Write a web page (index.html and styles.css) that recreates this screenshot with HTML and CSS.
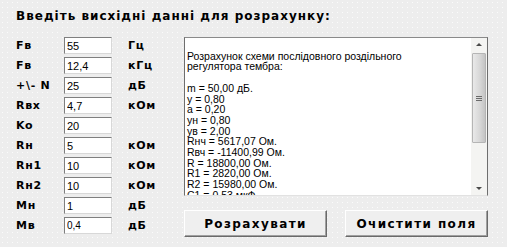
FILE: index.html
```html
<!DOCTYPE html>
<html lang="uk">
<head>
  <meta charset="UTF-8">
  <title>Регулятор тембра</title>
  <link rel="stylesheet" href="styles.css">
</head>
<body>
  <div class="window">
    <h2 class="title">Введіть висхідні данні для розрахунку:</h2>

    <div class="main">
      <div class="form">
        <label>Fв</label><input type="text" value="55"><span class="unit">Гц</span>
        <label>Fв</label><input type="text" value="12,4"><span class="unit">кГц</span>
        <label>+\- N</label><input type="text" value="25"><span class="unit">дБ</span>
        <label>Rвх</label><input type="text" value="4,7"><span class="unit">кОм</span>
        <label>Ko</label><input type="text" value="20"><span class="unit"></span>
        <label>Rн</label><input type="text" value="5"><span class="unit">кОм</span>
        <label>Rн1</label><input type="text" value="10"><span class="unit">кОм</span>
        <label>Rн2</label><input type="text" value="10"><span class="unit">кОм</span>
        <label>Мн</label><input type="text" value="1"><span class="unit">дБ</span>
        <label>Мв</label><input type="text" value="0,4" class="small"><span class="unit">дБ</span>
      </div>

      <div class="side">
        <div class="memo">
          <div class="memo-text">
            <div>&nbsp;</div>
            <div>Розрахунок схеми послідовного роздільного</div>
            <div>регулятора тембра:</div>
            <div>&nbsp;</div>
            <div>m = 50,00 дБ.</div>
            <div>y = 0,80</div>
            <div>a = 0,20</div>
            <div>yн = 0,80</div>
            <div>yв = 2,00</div>
            <div>Rнч = 5617,07 Ом.</div>
            <div>Rвч = -11400,99 Ом.</div>
            <div>R = 18800,00 Ом.</div>
            <div>R1 = 2820,00 Ом.</div>
            <div>R2 = 15980,00 Ом.</div>
            <div>C1 = 0,53 мкФ.</div>
          </div>
          <div class="scrollbar">
            <div class="arrow up"></div>
            <div class="thumb"><span class="grip"></span></div>
            <div class="track"></div>
            <div class="arrow down"></div>
          </div>
        </div>

        <div class="buttons">
          <button>Розрахувати</button>
          <button>Очистити поля</button>
        </div>
      </div>
    </div>
  </div>
</body>
</html>
```

FILE: styles.css
```css
body {
  margin: 0;
  background-color: #ededed;
  background-image: radial-gradient(circle, #fbfbfb 0.6px, transparent 0.9px);
  background-size: 5px 5px;
  font-family: "Liberation Sans", Arial, sans-serif;
}
.window {
  width: 507px;
  height: 247px;
  padding: 9px 0 0 16px;
  box-sizing: border-box;
}
.title {
  margin: 0;
  font-family: "DejaVu Sans", Verdana, sans-serif;
  font-size: 12px;
  font-weight: bold;
  letter-spacing: 1px;
  line-height: 14px;
  color: #000;
}
.main {
  display: flex;
  align-items: flex-start;
  margin-top: 12px;
}
.form {
  display: grid;
  grid-template-columns: 48px 48px 72px;
  grid-auto-rows: 20px;
  align-items: center;
}
.form label, .unit {
  font-family: "DejaVu Sans", Verdana, sans-serif;
  font-size: 11px;
  font-weight: bold;
  letter-spacing: 0.7px;
  color: #000;
}
.unit {
  padding-left: 16px;
}
.form input {
  width: 48px;
  height: 17px;
  box-sizing: border-box;
  padding: 1px 2px 0;
  border: 1px solid;
  border-color: #7f7f7f #d8d8d8 #d8d8d8 #7f7f7f;
  background: #fff;
  font-family: "Liberation Sans", Arial, sans-serif;
  font-size: 11px;
  color: #000;
  outline: none;
}
.form input.small {
  font-size: 10px;
}
.side {
  margin-top: 2px;
  width: 304px;
}
.memo {
  display: flex;
  height: 159px;
  box-sizing: border-box;
  border: 1px solid;
  border-color: #8a8a8a #6e6e6e #e2e2e2 #6e6e6e;
  background: #fff;
  overflow: hidden;
}
.memo-text {
  flex: 1;
  padding: 2px 0 0 2px;
  font-size: 10.5px;
  line-height: 10.7px;
  color: #000;
  white-space: nowrap;
  overflow: hidden;
}
.scrollbar {
  width: 16px;
  display: flex;
  flex-direction: column;
  background: #f4f4f2;
}
.arrow {
  height: 15px;
  position: relative;
}
.arrow::after {
  content: "";
  position: absolute;
  left: 5px;
  border-left: 3px solid transparent;
  border-right: 3px solid transparent;
}
.arrow.up::after {
  top: 5px;
  border-bottom: 3px solid #4a4a4a;
}
.arrow.down::after {
  top: 7px;
  border-top: 3px solid #4a4a4a;
}
.thumb {
  height: 90px;
  margin: 0 1px;
  box-sizing: border-box;
  border: 1px solid #b5b5b5;
  border-radius: 1px;
  background: linear-gradient(to right, #e9e9e9, #d6d6d6 60%, #c4c4c4);
  display: flex;
  align-items: center;
  justify-content: center;
}
.grip {
  width: 6px;
  height: 5px;
  background: repeating-linear-gradient(to bottom, #6a6a6a 0 1px, transparent 1px 2px);
}
.track {
  flex: 1;
}
.buttons {
  display: flex;
  justify-content: space-between;
  margin-top: 14px;
}
.buttons button {
  width: 143px;
  height: 27px;
  box-sizing: border-box;
  padding: 0;
  border: 1px solid;
  border-color: #ffffff #6a6a6a #6a6a6a #ffffff;
  box-shadow: inset -1px -1px 0 #a0a0a0;
  background: #efefef;
  font-family: "DejaVu Sans", Verdana, sans-serif;
  font-size: 12px;
  font-weight: bold;
  letter-spacing: 1.4px;
  color: #000;
}
```
